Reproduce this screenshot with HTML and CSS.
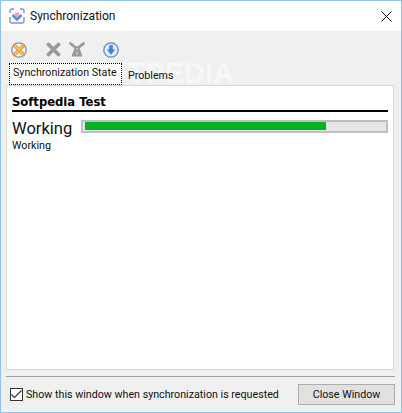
FILE: index.html
```html
<!DOCTYPE html>
<html lang="en">
<head>
  <meta charset="UTF-8" />
  <title>Synchronization</title>
  <link rel="stylesheet" href="styles.css">
</head>
<body>
  <div class="window">

    <!-- Title bar -->
    <div class="titlebar">
      <svg class="app-icon" width="16" height="16" viewBox="0 0 16 16">
        <path d="M1 5V3q0-2 2-2h2M11 1h2q2 0 2 2v2M1 9v4q0 2 2 2h10q2 0 2-2V9" fill="none" stroke="#8a90d0" stroke-width="1.400"/>
        <path d="M3.500 7l4.500 4.500L12.500 7" fill="none" stroke="#4c8fe0" stroke-width="2.600"/>
        <path d="M6 4.500h4v3L8 9.500l-2-2z" fill="#eda3bd"/>
      </svg>
      <span class="title">Synchronization</span>
      <svg class="close-icon" width="11" height="11" viewBox="0 0 11 11">
        <path d="M0.500 0.500l10 10M10.500 0.500l-10 10" stroke="#111" stroke-width="1"/>
      </svg>
    </div>

    <div class="body">
      <!-- Toolbar -->
      <div class="toolbar">
        <svg width="16" height="16" viewBox="0 0 16 16">
          <circle cx="8" cy="8" r="7.200" fill="#eef2f8" stroke="#7b93b5" stroke-width="1.300"/>
          <path d="M3.500 3.500l9 9M12.500 3.500l-9 9" stroke="#e8962a" stroke-width="3.400" stroke-linecap="round"/>
          <path d="M4 4l8 8M12 4l-8 8" stroke="#fbd27a" stroke-width="1.200" stroke-linecap="round"/>
        </svg>
        <svg class="gap-a" width="15" height="15" viewBox="0 0 15 15">
          <path d="M2.500 2.500l10 10M12.500 2.500l-10 10" stroke="#9a9a9a" stroke-width="3.800" stroke-linecap="round"/>
        </svg>
        <svg class="gap-b" width="16" height="15" viewBox="0 0 16 15">
          <path d="M1.500 1.500l5 4M14.500 1.500l-5 4" stroke="#9a9a9a" stroke-width="2.800" stroke-linecap="round"/>
          <path d="M6 4.500h4l3.500 10h-11z" fill="#9a9a9a"/>
          <path d="M8 6v2M8 10v3" stroke="#dcdcdc" stroke-width="1"/>
        </svg>
        <svg class="gap-c" width="16" height="16" viewBox="0 0 16 16">
          <circle cx="8" cy="8" r="7.200" fill="#e6effb" stroke="#5f87bd" stroke-width="1.300"/>
          <path d="M5.800 2.800h4.400v4.400h2.600L8 13.200 3.200 7.200h2.600z" fill="#3d82dc" stroke="#fff" stroke-width="0.500"/>
        </svg>
      </div>

      <!-- Tabs -->
      <div class="tabs">
        <div class="tab tab-active">Synchronization State</div>
        <div class="tab">Problems</div>
      </div>

      <!-- Panel -->
      <div class="panel">
        <div class="job-name">Softpedia Test</div>
        <div class="progress-row">
          <span class="status-big">Working</span>
          <div class="progress"><div class="progress-fill" style="width: 80.600%"></div></div>
        </div>
        <div class="status-small">Working</div>
      </div>
    </div>

    <!-- Bottom bar -->
    <div class="footer">
      <label class="check">
        <span class="check-box">
          <svg width="11" height="9" viewBox="0 0 11 9"><path d="M0.500 4.500l3 3 7-7" fill="none" stroke="#333" stroke-width="1.200"/></svg>
        </span>
        Show this window when synchronization is requested
      </label>
      <button class="close-btn">Close Window</button>
    </div>

    <div class="watermark">SOFTPEDIA<sup class="reg">®</sup></div>
  </div>
</body>
</html>
```

FILE: styles.css
```css
html, body {
  margin: 0;
  height: 100%;
}
body {
  font-family: Roboto, "Noto Sans", sans-serif;
  font-size: 10.700px;
  color: #111;
  background-color: #f0f0f0;
}
.window {
  position: relative;
  box-sizing: border-box;
  width: 402px;
  height: 413px;
  border: 1px solid #8fc3f2;
  background-color: #f0f0f0;
  display: flex;
  flex-direction: column;
  overflow: hidden;
}

.titlebar {
  height: 30px;
  background-color: #fff;
  display: flex;
  align-items: center;
  padding: 0 9px 0 8px;
  flex: none;
}
.title {
  margin-left: 5px;
  font-size: 12px;
  flex: 1;
}

.body {
  flex: 1;
  display: flex;
  flex-direction: column;
  padding: 0 7px 0 5px;
  min-height: 0;
}
.toolbar {
  height: 32px;
  display: flex;
  align-items: center;
  padding-left: 5px;
  padding-top: 5px;
  box-sizing: border-box;
  flex: none;
}
.gap-a { margin-left: 19px; }
.gap-b { margin-left: 8px; }
.gap-c { margin-left: 18px; }

/* sits above the watermark so the tab labels stay dark */
.tabs {
  position: relative;
  z-index: 1;
  display: flex;
  align-items: flex-end;
  height: 22px;
  padding-left: 3px;
  flex: none;
}
.tab {
  padding: 0 6px 1px;
  height: 18px;
  line-height: 17px;
  box-sizing: border-box;
  white-space: nowrap;
}
.tab-active {
  width: 113px;
  height: 22px;
  line-height: 20px;
  padding: 0 0 0 4px;
  background-color: #fff;
  outline: 1px dotted #000;
  outline-offset: -1px;
}

.panel {
  flex: 1;
  background-color: #fff;
  border: 1px solid #d9d9d9;
  padding: 8px 5px 0;
  min-height: 0;
}
.job-name {
  font-family: "DejaVu Sans", sans-serif;
  font-weight: bold;
  font-size: 11.600px;
  line-height: 16px;
  color: #000;
  border-bottom: 2px solid #000;
}
.progress-row {
  display: flex;
  align-items: flex-start;
  margin-top: 7px;
}
.status-big {
  font-size: 16.500px;
  line-height: 20px;
  width: 69px;
  flex: none;
}
.progress {
  flex: 1;
  height: 13px;
  margin-top: 1px;
  box-sizing: border-box;
  border: 2px solid #bfbfbf;
  background-color: #e6e6e6;
  padding: 0 2px 1px;
}
.progress-fill {
  height: 100%;
  background-color: #06b025;
}
.status-small {
  line-height: 14px;
}

.footer {
  flex: none;
  height: 35px;
  margin: 6px 6px 0 5px;
  border-top: 1px solid #a0a0a0;
  display: flex;
  align-items: center;
  justify-content: space-between;
}
.check {
  display: flex;
  align-items: center;
  padding-left: 4px;
  white-space: nowrap;
}
.check-box {
  box-sizing: border-box;
  width: 13px;
  height: 13px;
  border: 1px solid #333;
  background-color: #fff;
  display: flex;
  align-items: center;
  justify-content: center;
  margin-right: 3px;
}
.close-btn {
  width: 97px;
  height: 21px;
  padding: 0;
  font-family: inherit;
  font-size: 10.700px;
  color: #111;
  background-color: #e1e1e1;
  border: 1px solid #adadad;
}

.watermark {
  position: absolute;
  left: 67px;
  top: 54px;
  font-family: "Liberation Sans", sans-serif;
  font-weight: bold;
  font-size: 29px;
  line-height: 36px;
  color: rgba(255, 255, 255, 0.55);
  pointer-events: none;
}
.reg {
  font-size: 8px;
  font-weight: normal;
  vertical-align: 14px;
  line-height: 0;
}
```
